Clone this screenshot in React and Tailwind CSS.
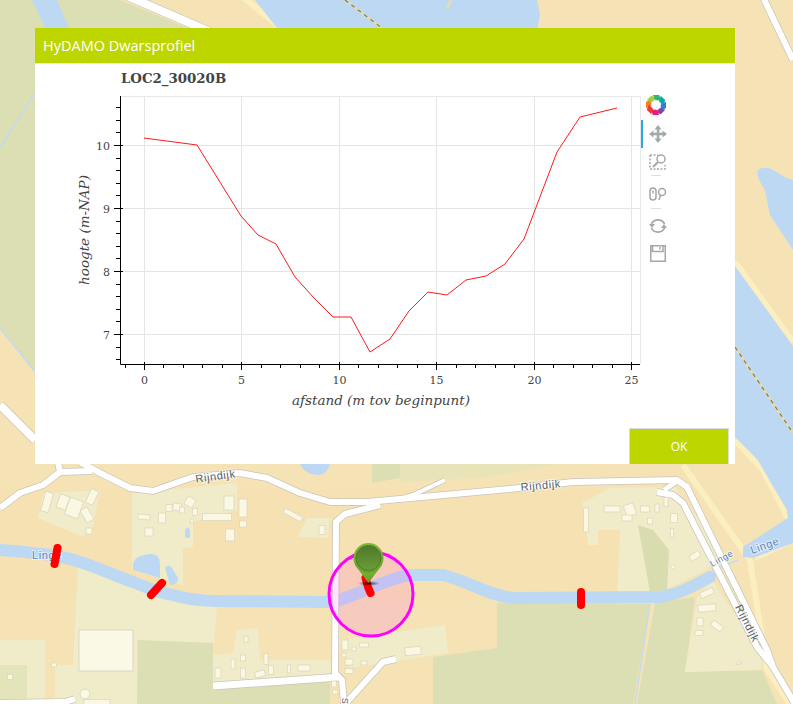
import React from 'react';

const ROADS = [
  ['M125 -5 L215 34 L240 42', 8],
  ['M0 405 L35 440', 8],
  ['M0 508 L20 493 L43 485 L60 472 L58 462', 6],
  ['M60 472 L92 471', 6],
  ['M80 462 L100 473 L130 488 L153 491 L193 477 L240 473 L267 478 L300 493 L330 502 L367 502 L400 499 L520 488 L573 482 L677 480 L687 487 L767 650 L773 667 L795 704', 6],
  ['M657 492 L673 495 L683 503 L757 647 L773 667', 6],
  ['M664 490 L677 481', 5],
  ['M445 480 L413 495 L400 499', 4],
  ['M380 505 L345 514 L336 522 L335 673 L342 680 L344 704', 6],
  ['M213 686 L340 677', 7],
  ['M347 702 L383 662 L396 659', 6],
  ['M0 703 L65 702 L75 699', 6],
  ['M762 -5 L793 60', 6],
];

const BUILDINGS = [
  [47, 502, 8, 20, 15], [63, 502, 10, 14, 20], [74, 508, 14, 18, 20], [92, 497, 8, 15, 25], [87, 515, 8, 14, -30],
  [89, 531, 6, 6, 0], [144, 517, 12, 5, 5], [162, 518, 7, 10, 0], [149, 532, 8, 8, 0], [169, 508, 6, 7, 0],
  [177, 507, 8, 7, 10], [182, 510, 5, 6, 0], [190, 502, 9, 9, 30], [195, 512, 5, 7, 0], [192, 521, 3, 4, 0],
  [217, 517, 29, 7, 0], [243, 508, 8, 18, 0], [229, 503, 10, 14, 0], [243, 524, 7, 6, 0], [230, 535, 9, 12, 0],
  [293, 515, 20, 5, 28], [322, 530, 6, 9, 0], [246, 639, 4, 6, 0], [218, 673, 6, 10, 0], [233, 664, 4, 10, 0],
  [243, 658, 5, 6, 0], [243, 673, 5, 10, 0], [260, 674, 10, 6, -15], [266, 659, 4, 11, 0], [271, 670, 5, 9, 0],
  [289, 669, 3, 8, 0], [304, 668, 12, 6, 0], [345, 645, 6, 10, 0], [344, 655, 4, 4, 0], [354, 649, 4, 4, 0],
  [364, 645, 9, 4, 0], [349, 662, 8, 6, 0], [364, 663, 6, 4, 0], [349, 671, 8, 5, 0], [334, 684, 5, 6, 0],
  [335, 692, 5, 4, 0], [54, 665, 5, 4, 0], [10, 677, 5, 5, 0], [97, 703, 26, 7, 0], [586, 520, 5, 24, 0],
  [612, 509, 16, 6, 0], [630, 510, 10, 12, -20], [627, 518, 10, 6, 0], [645, 509, 9, 6, 0], [650, 521, 5, 6, 0],
  [657, 508, 4, 8, 0], [666, 502, 4, 9, 0], [674, 518, 7, 9, 0], [672, 533, 3, 9, 0], [695, 556, 11, 6, -35],
  [673, 567, 4, 3, 45], [707, 593, 14, 6, -25], [707, 608, 18, 7, -5], [700, 622, 6, 8, 0], [717, 626, 12, 6, 35],
  [699, 633, 8, 5, 0], [739, 663, 5, 2, -20], [413, 651, 16, 8, -5],
];

const PROFILE = [
  [144, 138], [197, 145], [241, 216], [258, 235], [276, 244], [295, 277], [314, 298], [333, 317], [351, 317], [370, 352],
  [390, 339], [409, 311], [428, 292], [447, 295], [466, 280], [486, 276], [505, 264], [524, 239], [557, 152], [580, 117], [617, 108],
];

const X_MAJOR = [0, 5, 10, 15, 20, 25];
const X_MINOR = Array.from({ length: 27 }, (_, i) => i - 1).filter((v) => v % 5 !== 0);
const Y_MAJOR = [7, 8, 9, 10];
const Y_MINOR = Array.from({ length: 21 }, (_, i) => 6.6 + i * 0.2).filter((v) => Math.abs(v - Math.round(v)) > 0.05);

const xPos = (v) => Math.round(144 + v * 19.48) + 0.5;
const yPos = (v) => Math.round(145 + (10 - v) * 63) + 0.5;

const MapLabel = ({ x, y, rotate, size = 11, color = '#585d66', children }) => (
  <text
    x={x}
    y={y}
    transform={`rotate(${rotate} ${x} ${y})`}
    textAnchor="middle"
    fontFamily="'Liberation Sans', sans-serif"
    fontSize={size}
    letterSpacing="0.6"
    fill={color}
    stroke="#ffffff"
    strokeOpacity="0.55"
    strokeWidth="2"
    paintOrder="stroke"
  >
    {children}
  </text>
);

const MapBackground = () => (
  <svg className="absolute inset-0" width="793" height="704" viewBox="0 0 793 704">
    <defs>
      <linearGradient id="pinFill" x1="0" y1="0" x2="0" y2="1">
        <stop offset="0" stopColor="#4f7a2b" />
        <stop offset="1" stopColor="#6b9c38" />
      </linearGradient>
      <linearGradient id="pinRing" x1="0" y1="0" x2="0" y2="1">
        <stop offset="0" stopColor="#7fb83a" />
        <stop offset="1" stopColor="#66a02a" />
      </linearGradient>
      <radialGradient id="pinShadow">
        <stop offset="0" stopColor="#000000" stopOpacity="0.7" />
        <stop offset="1" stopColor="#000000" stopOpacity="0" />
      </radialGradient>
    </defs>

    <g className="blur-[0.4px]">
      <rect width="793" height="704" fill="#f5e3b6" />

      {/* farmland */}
      <path d="M0 0 H120 L240 50 V380 L35 372 L0 328 Z" fill="#dcdfb3" />
      <path d="M0 490 H640 V600 H0 Z" fill="#f6dfb1" opacity="0.7" />
      <path d="M372 464 H400 V478 L372 483 Z" fill="#dcdfb3" />
      <path d="M400 464 H560 L480 478 L400 482 Z" fill="#e9e3b8" />
      <path d="M497 603 L650 604 L633 704 L433 704 L433 657 L497 648 Z" fill="#dcdfb3" />
      <path d="M655 603 L695 597 L685 672 L762 670 L777 704 L637 704 Z" fill="#dcdfb3" />

      {/* built-up land */}
      <path d="M43 493 L100 490 L93 527 L83 537 L38 518 Z" fill="#f0ebc8" />
      <path d="M132 493 L237 483 L237 510 L193 522 L193 547 L183 548 L183 585 L132 570 Z" fill="#f0ebc8" />
      <path d="M78 567 L217 608 L213 650 L137 640 L137 704 L55 704 L55 665 L73 665 Z" fill="#f0ebc8" />
      <path d="M213 655 L233 653 L237 630 L258 628 L260 660 L330 660 L332 673 L213 687 Z" fill="#f0ebc8" />
      <path d="M298 537 L307 518 L330 518 L328 538 Z" fill="#f0ebc8" />
      <path d="M340 640 L445 625 L448 653 L350 668 Z" fill="#f0ebc8" />
      <path d="M582 503 L610 488 L675 487 L720 548 L707 570 L669 588 L638 592 L617 592 L620 530 L598 530 L598 545 L588 545 Z" fill="#f0ebc8" />
      <path d="M638 525 L653 530 L669 550 L667 590 L650 592 Z" fill="#d8dcae" />
      <path d="M697 597 L712 580 L760 650 L762 670 L685 672 Z" fill="#f0ebc8" />
      <path d="M0 640 L45 640 L45 704 L0 704 Z" fill="#f0ebc8" />
      <path d="M0 665 H27 V700 L17 704 H0 Z" fill="#dcdfb3" opacity="0.6" />
      <path d="M138 640 L213 643 L213 687 L330 680 L330 704 H137 Z" fill="#dcdfb3" />
      <rect x="79" y="630" width="54" height="41" fill="#faf9e6" stroke="#dcd8c0" />
      <circle cx="85" cy="694" r="5" fill="#faf9e6" stroke="#dcd8c0" />

      {/* dike bands */}
      <path d="M240 -5 L302 45 M683 465 L750 560 L767 670 L790 704 M755 558 L793 540 M735 262 L793 342 M735 440 L763 470 L788 518" fill="none" stroke="#fbeebf" strokeWidth="6" />

      {/* water */}
      <path d="M32 0 H57 L75 42 L52 42 Z" fill="#bdd8f2" />
      <path d="M255 0 H537 L540 14 L535 45 V70 H310 Z" fill="#bdd8f2" />
      <path d="M758 170 Q765 165 775 171 Q785 178 793 180 V250 L770 215 L765 190 Q755 175 758 170 Z" fill="#bdd8f2" />
      <path d="M735 266 L793 346 V520 L788 518 L787 510 L758 460 L735 437 Z" fill="#bdd8f2" />
      <path d="M758 460 L793 460 V543 L753 558 L743 557 L743 547 L788 518 L787 510 Z" fill="#bdd8f2" />
      <path d="M0 550 C30 552 60 555 77 561 C100 568 115 576 133 582 C150 589 165 594 173 595 C190 600 205 601 217 601 L330 602 C350 600 385 578 410 575 L443 575 C470 582 490 596 513 598 L660 597 C680 594 695 585 710 577" fill="none" stroke="#bdd8f2" strokeWidth="12" strokeLinecap="round" />
      <path d="M133 564 Q134 556 150 554 Q160 553 160 565 L160 578 L133 570 Z" fill="#bdd8f2" />
      <path d="M165 568 Q168 563 172 568 L178 578 Q178 585 170 585 Z" fill="#bdd8f2" />
      <path d="M300 464 H330 Q328 474 318 475 Q305 475 300 464 Z" fill="#bdd8f2" />
      <rect x="185" y="528" width="5" height="10" rx="2.5" fill="#bdd8f2" />
      <path d="M0 148 L35 93 M0 328 L35 372 M650 604 L635 704 M712 570 L738 560" fill="none" stroke="#c3daf0" strokeWidth="1.5" />
      <path d="M345 0 L395 38 M735 347 L793 433 M447 9 L451 0" fill="none" stroke="#e6dcae" strokeWidth="2.5" />
      <path d="M345 0 L395 38 M735 347 L793 433" fill="none" stroke="#7f7c70" strokeWidth="1.25" strokeDasharray="4 4" />

      {/* roads */}
      {ROADS.map(([d, w]) => (
        <path key={d} d={d} fill="none" stroke="#c9c5bb" strokeWidth={w + 1.5} strokeLinejoin="round" />
      ))}
      {ROADS.map(([d, w]) => (
        <path key={d} d={d} fill="none" stroke="#ffffff" strokeWidth={w} strokeLinejoin="round" />
      ))}

      {BUILDINGS.map(([cx, cy, w, h, rot]) => (
        <rect
          key={`${cx}-${cy}`}
          x={cx - w / 2}
          y={cy - h / 2}
          width={w}
          height={h}
          transform={`rotate(${rot} ${cx} ${cy})`}
          fill="#faf8e2"
          stroke="#dbd6bd"
          strokeWidth="0.75"
        />
      ))}
    </g>

    <MapLabel x={216} y={480} rotate={-8}>Rijndijk</MapLabel>
    <MapLabel x={541} y={489} rotate={-5}>Rijndijk</MapLabel>
    <MapLabel x={744} y={625} rotate={63}>Rijndijk</MapLabel>
    <MapLabel x={47} y={559} rotate={0} color="#5b87b9">Linge</MapLabel>
    <MapLabel x={723} y={561} rotate={-28} size={9} color="#5b87b9">Linge</MapLabel>
    <MapLabel x={766} y={549} rotate={-20} color="#5b87b9">Linge</MapLabel>
    <MapLabel x={342} y={701} rotate={90} size={9}>S</MapLabel>

    {/* measured locations */}
    <path d="M57.5 548 L54.5 564" fill="none" stroke="#ff0000" strokeWidth="8" strokeLinecap="round" />
    <path d="M162 583 L151 595" fill="none" stroke="#ff0000" strokeWidth="8" strokeLinecap="round" />
    <path d="M581 592 L581 605" fill="none" stroke="#ff0000" strokeWidth="8" strokeLinecap="round" />
    <circle cx="371" cy="594" r="42" fill="#ff00ff" fillOpacity="0.1" stroke="#ff00ff" strokeWidth="3" />
    <path d="M365.5 578 L368 587 L370.5 593" fill="none" stroke="#ff0000" strokeWidth="8" strokeLinecap="round" />

    {/* selected marker */}
    <ellipse cx="369" cy="583.5" rx="11" ry="2.5" fill="url(#pinShadow)" />
    <path d="M355 565 L368.5 583 L382 565 Z" fill="url(#pinRing)" />
    <circle cx="368.5" cy="558" r="15" fill="url(#pinRing)" />
    <circle cx="368.5" cy="558" r="12.5" fill="url(#pinFill)" stroke="#4d7d24" strokeWidth="1" />
  </svg>
);

const ProfileChart = () => (
  <svg className="w-[606px] h-[364px] shrink-0" viewBox="35 64 606 364">
    <text x="121" y="83" fontFamily="'DejaVu Serif', serif" fontSize="13.33" fontWeight="700" fill="#444444">LOC2_30020B</text>

    {/* grid */}
    <path d="M120.5 96.5 H640.5 V364" fill="none" stroke="#e8e8e8" />
    {X_MAJOR.map((v) => (
      <path key={v} d={`M${xPos(v)} 96 V364`} stroke="#e5e5e5" />
    ))}
    {Y_MAJOR.map((v) => (
      <path key={v} d={`M121 ${yPos(v)} H640`} stroke="#e5e5e5" />
    ))}

    <polyline points={PROFILE.map((p) => p.join(',')).join(' ')} fill="none" stroke="#ff0000" strokeWidth="0.9" />

    {/* axes */}
    <path d="M120.5 96 V364.5 H640" fill="none" stroke="#000000" />
    {X_MAJOR.map((v) => (
      <path key={v} d={`M${xPos(v)} 362 V370`} stroke="#000000" />
    ))}
    {X_MINOR.map((v) => (
      <path key={v} d={`M${xPos(v)} 364 V368`} stroke="#000000" />
    ))}
    {Y_MAJOR.map((v) => (
      <path key={v} d={`M114 ${yPos(v)} H123`} stroke="#000000" />
    ))}
    {Y_MINOR.map((v) => (
      <path key={v} d={`M116 ${yPos(v)} H120`} stroke="#000000" />
    ))}

    {X_MAJOR.map((v) => (
      <text key={v} x={xPos(v)} y="384" textAnchor="middle" fontFamily="'DejaVu Serif', serif" fontSize="11" fill="#444444">{v}</text>
    ))}
    {Y_MAJOR.map((v) => (
      <text key={v} x="110" y={yPos(v) + 4} textAnchor="end" fontFamily="'DejaVu Serif', serif" fontSize="11" fill="#444444">{v}</text>
    ))}

    <text x="381" y="405" textAnchor="middle" fontFamily="'DejaVu Serif', serif" fontSize="13.5" fontStyle="italic" fill="#444444">afstand (m tov beginpunt)</text>
    <text x="89" y="230" transform="rotate(-90 89 230)" textAnchor="middle" fontFamily="'DejaVu Serif', serif" fontSize="13.5" fontStyle="italic" fill="#444444">hoogte (m-NAP)</text>
  </svg>
);

const BokehLogo = () => (
  <svg width="22" height="22" viewBox="-11 -11 22 22">
    {['#f5821f', '#a6ce39', '#2eb872', '#12a5a5', '#2f7fd6', '#8e3f9e', '#e81a7a', '#ee3b3b'].map((c, i) => (
      <path key={c} d="M-3.2 -10 L3.2 -10 L5.2 -4.6 L-0.6 -4.8 Z" fill={c} transform={`rotate(${i * 45 - 90})`} />
    ))}
  </svg>
);

const icon = { fill: 'none', stroke: '#a3a8a9', strokeWidth: 1.5 };

const ProfileToolbar = () => (
  <div className="flex w-[30px] flex-col pt-[30px]">
    <div className="flex h-[22px] items-center justify-center"><BokehLogo /></div>
    <div className="mt-[4px] flex h-7 items-center justify-center border-l-2 border-[#26aae1] pl-[1px]">
      <svg width="18" height="18" viewBox="0 0 18 18">
        <path d="M9 2 V16 M2 9 H16" {...icon} strokeWidth="2.5" />
        <path d="M9 0 L12.5 4.5 H5.5 Z M9 18 L12.5 13.5 H5.5 Z M0 9 L4.5 5.5 V12.5 Z M18 9 L13.5 5.5 V12.5 Z" fill="#a3a8a9" />
      </svg>
    </div>
    <div className="flex h-[27px] items-center justify-center pl-[3px]">
      <svg width="18" height="16" viewBox="0 0 18 16">
        <path d="M1 1 H9 M1 1 V15 H16 V11" {...icon} strokeDasharray="2 1.5" />
        <circle cx="12" cy="5" r="4" {...icon} />
        <path d="M9 8 L4 13" {...icon} strokeWidth="2" />
      </svg>
    </div>
    <div className="ml-[10px] h-px w-[10px] bg-[#dddddd]" />
    <div className="mt-[3px] flex h-[29px] items-center justify-center pl-[3px]">
      <svg width="18" height="14" viewBox="0 0 18 14">
        <rect x="1" y="1" width="6" height="12" rx="3" {...icon} />
        <path d="M4 3.5 V6.5" {...icon} />
        <circle cx="13" cy="5" r="3.5" {...icon} />
        <path d="M11.5 8 L10 13" {...icon} />
      </svg>
    </div>
    <div className="ml-[10px] h-px w-[10px] bg-[#dddddd]" />
    <div className="flex h-[34px] items-center justify-center pl-[3px]">
      <svg width="18" height="16" viewBox="0 0 18 16">
        <path d="M2.5 6 A7 6.5 0 0 1 15.5 6 M15.5 10 A7 6.5 0 0 1 2.5 10" {...icon} strokeWidth="1.75" />
        <path d="M0 6 H6 L3 10 Z M18 10 H12 L15 6 Z" fill="#a3a8a9" />
      </svg>
    </div>
    <div className="flex h-5 items-center justify-center pl-[3px]">
      <svg width="16" height="17" viewBox="0 0 16 17">
        <path d="M0.75 0.75 H15.25 V16.25 H0.75 Z M2.5 0.75 V6.5 H13 V0.75" {...icon} />
        <path d="M10 2 V4.5" {...icon} />
      </svg>
    </div>
  </div>
);

export default function App() {
  return (
    <div className="relative h-[704px] w-[793px] overflow-hidden">
      <MapBackground />
      <div className="absolute left-[35px] top-[28px] flex h-[436px] w-[700px] flex-col bg-white font-['Open_Sans',sans-serif]">
        <div className="flex h-[36px] items-center border-b border-[#e5e5e5] bg-[#bdd600] px-2 text-[14.5px] text-white">
          HyDAMO Dwarsprofiel
        </div>
        <div className="flex">
          <ProfileChart />
          <ProfileToolbar />
        </div>
        <div className="flex justify-end pr-[6px]">
          <button className="h-[36px] w-[100px] border border-b-0 border-[#dddddd] bg-[#bdd600] text-[12px] text-white">
            OK
          </button>
        </div>
      </div>
    </div>
  );
}
